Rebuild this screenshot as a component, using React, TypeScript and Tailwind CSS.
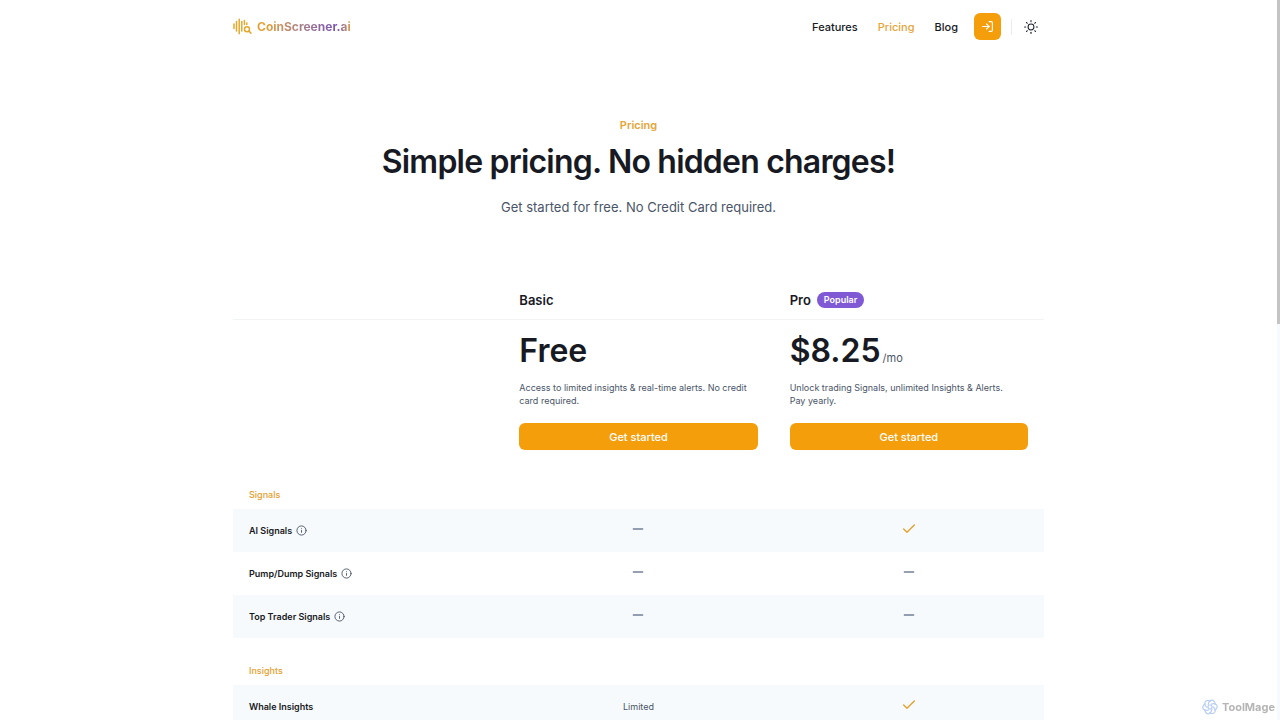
import type { ReactNode } from "react";
import { FiCheck, FiInfo, FiLogIn, FiMinus, FiSun } from "react-icons/fi";

interface Plan {
  name: string;
  badge?: string;
  price: string;
  period?: string;
  description: string;
}

type Availability = boolean | string;

interface Feature {
  label: string;
  hasInfo?: boolean;
  values: Availability[];
}

interface FeatureGroup {
  title: string;
  features: Feature[];
}

const navLinks = [
  { label: "Features", active: false },
  { label: "Pricing", active: true },
  { label: "Blog", active: false },
];

const plans: Plan[] = [
  {
    name: "Basic",
    price: "Free",
    description: "Access to limited insights & real-time alerts. No credit card required.",
  },
  {
    name: "Pro",
    badge: "Popular",
    price: "$8.25",
    period: "/mo",
    description: "Unlock trading Signals, unlimited Insights & Alerts.\nPay yearly.",
  },
];

const groups: FeatureGroup[] = [
  {
    title: "Signals",
    features: [
      { label: "AI Signals", hasInfo: true, values: [false, true] },
      { label: "Pump/Dump Signals", hasInfo: true, values: [false, false] },
      { label: "Top Trader Signals", hasInfo: true, values: [false, false] },
    ],
  },
  {
    title: "Insights",
    features: [{ label: "Whale Insights", values: ["Limited", true] }],
  },
];

const LogoMark = () => (
  <svg viewBox="0 0 20 18" className="w-5 h-[18px]" fill="none" stroke="#e5a82e" strokeWidth="1.5" strokeLinecap="round" aria-hidden="true">
    <path d="M1 6v4.5M3.5 3.5v9.5M6.2 1.2v14.6M8.8 3.5v9.5M11.4 2.6v4M13.8 5v1.4" />
    <circle cx="14" cy="11.2" r="2.5" />
    <path d="m15.9 13.1 2 2" />
  </svg>
);

const WatermarkMark = () => (
  <svg viewBox="0 0 16 16" className="w-4 h-4" fill="none" stroke="#b7cdf3" strokeWidth="1.2" strokeLinecap="round" aria-hidden="true">
    {[0, 60, 120, 180, 240, 300].map((angle) => (
      <path key={angle} d="M6.2 5.6C6.4 2.2 9.4.2 11.6 1.8c1.4 1 1.6 2.4 1.4 3.6" transform={`rotate(${angle} 8 8)`} />
    ))}
    <circle cx="8" cy="8" r="2" />
  </svg>
);

const Header = () => (
  <header className="flex items-center justify-between h-[53px]">
    <a href="#" className="flex items-center gap-1 text-xs leading-5 font-bold">
      <LogoMark />
      <span className="bg-gradient-to-r from-[#e0a030] from-10% via-[#7a4fb5] via-85% to-[#e0a030] bg-clip-text text-transparent">
        CoinScreener.ai
      </span>
    </a>

    <div className="flex items-center">
      <nav className="flex items-center gap-5 mr-4 text-[11px] leading-4 font-medium">
        {navLinks.map((link) => (
          <a key={link.label} href="#" className={link.active ? "text-[#e5a53a]" : "text-[#171923]"}>
            {link.label}
          </a>
        ))}
      </nav>
      <button aria-label="Log in" className="flex items-center justify-center w-[27px] h-[27px] rounded-md bg-[#f59e0b] text-white">
        <FiLogIn size={13} strokeWidth={2} />
      </button>
      <span className="w-px h-4 ml-2.5 mr-[5px] bg-[#e8ecf1]" />
      <button aria-label="Toggle theme" className="flex items-center justify-center w-[27px] h-[27px] text-[#1a202c]">
        <FiSun size={14} strokeWidth={1.75} />
      </button>
    </div>
  </header>
);

const FeatureValue = ({ value }: { value: Availability }): ReactNode => {
  if (typeof value === "string") return <span>{value}</span>;
  if (value) return <FiCheck size={16} className="mx-auto mb-1 text-[#e5a02c]" aria-label="Included" />;
  return <FiMinus size={16} className="mx-auto mb-1 text-[#718096]" aria-label="Not included" />;
};

const PricingTable = () => (
  <table className="w-full table-fixed text-left">
    <thead>
      <tr className="h-[39px] border-b border-[#f1f3f5] align-middle">
        <td />
        {plans.map((plan) => (
          <th key={plan.name} scope="col" className="px-4 pt-0.5 text-[13px] leading-5 font-semibold text-[#171923]">
            <div className="flex items-center gap-1.5">
              {plan.name}
              {plan.badge && (
                <span className="px-[7px] rounded-full bg-[#805ad5] text-[9px] leading-4 font-semibold text-white">{plan.badge}</span>
              )}
            </div>
          </th>
        ))}
      </tr>
    </thead>
    <tbody>
      <tr className="align-top">
        <td />
        {plans.map((plan) => (
          <td key={plan.name} className="px-4 pt-[11px]">
            <div className="flex items-baseline gap-0.5">
              <span className="text-[32px] leading-10 font-semibold text-[#171923]">{plan.price}</span>
              {plan.period && <span className="text-[11px] leading-4 text-[#4a5568]">{plan.period}</span>}
            </div>
            <p className="mt-2.5 mb-4 whitespace-pre-line text-[9px] leading-[13px] text-[#4a5568]">{plan.description}</p>
            <button className="w-full h-[27px] rounded-md bg-[#f59e0b] text-[11px] leading-4 font-medium text-white">
              Get started
            </button>
          </td>
        ))}
      </tr>
    </tbody>
    {groups.map((group, index) => (
      <tbody key={group.title}>
        <tr>
          <th
            scope="rowgroup"
            colSpan={3}
            className={`px-4 pb-2 text-[9px] leading-[13px] font-medium text-[#e5a02c] ${index === 0 ? "pt-[38px]" : "pt-[26px]"}`}
          >
            {group.title}
          </th>
        </tr>
        {group.features.map((feature) => (
          <tr key={feature.label} className="h-[43px] odd:bg-white even:bg-[#f7fafc]">
            <th scope="row" className="px-4 text-[9px] leading-[13px] font-semibold text-[#171923]">
              <div className="flex items-center gap-1">
                {feature.label}
                {feature.hasInfo && <FiInfo size={11} className="text-[#4a5568]" aria-label="More info" />}
              </div>
            </th>
            {feature.values.map((value, i) => (
              <td key={plans[i].name} className="px-4 text-center text-[9px] leading-[13px] text-[#4a5568]">
                <FeatureValue value={value} />
              </td>
            ))}
          </tr>
        ))}
      </tbody>
    ))}
  </table>
);

const App = () => {
  return (
    <div className="flex h-screen overflow-hidden bg-white font-['Inter',sans-serif] text-[#171923]">
      <div className="flex-1 min-w-0">
        <div className="max-w-[811px] mx-auto">
          <Header />

          <main>
            <section className="pt-16 pb-[63px] text-center">
              <p className="text-[11px] leading-4 font-semibold text-[#e5a53a]">Pricing</p>
              <h1 className="mt-[9px] text-[32px] leading-10 font-semibold tracking-tight">Simple pricing. No hidden charges!</h1>
              <p className="mt-[15px] text-[13px] leading-5 text-[#4a5568]">Get started for free. No Credit Card required.</p>
            </section>

            <PricingTable />
          </main>
        </div>
      </div>

      {/* Scroll track */}
      <div className="w-[3px] bg-[#f7fafc]">
        <div className="h-[45%] bg-[#c4c4c4]" />
      </div>

      {/* Watermark */}
      <div className="fixed right-[5px] bottom-1 flex items-center gap-1 text-[11px] leading-[18px] font-bold text-[#b5b5b5]">
        <WatermarkMark />
        ToolMage
      </div>
    </div>
  );
};

export default App;
